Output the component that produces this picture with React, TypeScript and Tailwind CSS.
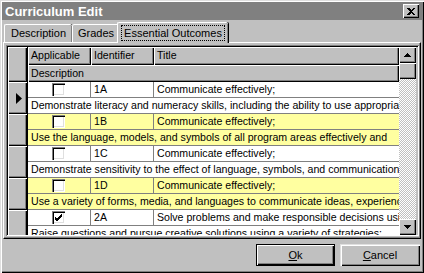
import React from 'react';

type Outcome = {
  id: string;
  title: string;
  description: string;
  applicable: boolean;
};

const outcomes: Outcome[] = [
  {
    id: '1A',
    title: 'Communicate effectively;',
    description: 'Demonstrate literacy and numeracy skills, including the ability to use appropriate technology',
    applicable: false,
  },
  {
    id: '1B',
    title: 'Communicate effectively;',
    description: 'Use the language, models, and symbols of all program areas effectively and',
    applicable: false,
  },
  {
    id: '1C',
    title: 'Communicate effectively;',
    description: 'Demonstrate sensitivity to the effect of language, symbols, and communication',
    applicable: false,
  },
  {
    id: '1D',
    title: 'Communicate effectively;',
    description: 'Use a variety of forms, media, and languages to communicate ideas, experiences',
    applicable: false,
  },
  {
    id: '2A',
    title: 'Solve problems and make responsible decisions using critical thinking',
    description: 'Raise questions and pursue creative solutions using a variety of strategies;',
    applicable: true,
  },
];

const raised = 'bg-[#c0c0c0] shadow-[inset_1px_1px_0_#ffffff,inset_-1px_-1px_0_#000000,inset_-2px_-2px_0_#808080]';

const CheckBox: React.FC<{ checked: boolean }> = ({ checked }) => (
  <div className="w-[13px] h-[13px] bg-white flex items-center justify-center shadow-[inset_1px_1px_0_#808080,inset_2px_2px_0_#000000,inset_-1px_-1px_0_#ffffff,inset_-2px_-2px_0_#dfdfdf]">
    {checked && (
      <svg width="9" height="9" viewBox="0 0 9 9" className="block">
        <path d="M1 4 L3 6 L8 1 M1 5 L3 7 L8 2 M1 6 L3 8 L8 3" stroke="#000" strokeWidth="1" fill="none" shapeRendering="crispEdges" />
      </svg>
    )}
  </div>
);

const ScrollArrow: React.FC<{ up?: boolean }> = ({ up }) => (
  <div className={`h-[16px] w-[17px] flex items-center justify-center ${raised}`}>
    <svg width="7" height="4" viewBox="0 0 7 4" className="block">
      <path d={up ? 'M3.5 0 L7 4 L0 4 Z' : 'M0 0 L7 0 L3.5 4 Z'} fill="#000" shapeRendering="crispEdges" />
    </svg>
  </div>
);

const Tab: React.FC<{ label: string; width: string; selected?: boolean }> = ({ label, width, selected }) =>
  selected ? (
    <div
      className={`${width} h-[21px] -mb-px -ml-[2px] relative z-10 bg-[#c0c0c0] border-t border-l border-white rounded-tl-[2px] rounded-tr-[2px] shadow-[inset_-1px_0_0_#808080,1px_0_0_#000000] flex items-start justify-center pt-[2px] px-[3px]`}
    >
      <div className="w-full h-[16px] border border-dotted border-black flex items-center justify-center">
        {label}
      </div>
    </div>
  ) : (
    <div
      className={`${width} h-[18px] bg-[#c0c0c0] border-t border-l border-white rounded-tl-[2px] rounded-tr-[2px] shadow-[inset_-1px_0_0_#808080,1px_0_0_#000000] flex items-center justify-center`}
    >
      {label}
    </div>
  );

export default function App() {
  return (
    <div
      className="w-[424px] h-[273px] bg-[#c0c0c0] p-[2px] flex flex-col text-[10.6px] text-black overflow-hidden shadow-[inset_1px_1px_0_#dfdfdf,inset_2px_2px_0_#ffffff,inset_-1px_-1px_0_#000000,inset_-2px_-2px_0_#808080]"
      style={{ fontFamily: '"Liberation Sans", Arial, sans-serif' }}
    >
      {/* title bar */}
      <div className="h-[18px] bg-[#808080] flex items-center justify-between pl-[3px] pr-[3px] shrink-0">
        <span className="text-white font-bold text-[13px] leading-none">Curriculum Edit</span>
        <div className="w-[16px] h-[14px] bg-[#c0c0c0] flex items-center justify-center shadow-[inset_1px_1px_0_#ffffff,inset_-1px_-1px_0_#000000,inset_-2px_-2px_0_#808080]">
          <svg width="8" height="7" viewBox="0 0 8 7" className="block">
            <path d="M0 0 L2 0 L4 2 L6 0 L8 0 L5 3.5 L8 7 L6 7 L4 5 L2 7 L0 7 L3 3.5 Z" fill="#000" shapeRendering="crispEdges" />
          </svg>
        </div>
      </div>

      {/* tabs */}
      <div className="h-[22px] flex items-end pl-[2px] shrink-0 text-[11px]">
        <Tab label="Description" width="w-[68px]" />
        <Tab label="Grades" width="w-[47px]" />
        <Tab label="Essential Outcomes" width="w-[111px]" selected />
      </div>

      {/* tab panel */}
      <div className="h-[197px] mx-[1px] border-t border-l border-white border-r border-b border-r-black border-b-black shadow-[inset_-1px_-1px_0_#808080] pt-[2px] pl-[2px] pr-[1px] pb-[2px] shrink-0">
        <div className="h-full flex shadow-[inset_1px_1px_0_#808080,inset_-1px_-1px_0_#ffffff] p-[1px]">
          <div className="flex-1 flex border-t border-l border-black overflow-hidden">
            {/* indicator column */}
            <div className="w-[20px] flex flex-col border-r border-black shrink-0">
              <div className={`h-[35px] shrink-0 ${raised}`} />
              {outcomes.map((o, i) => (
                <div key={o.id} className={`h-[32px] shrink-0 flex items-center justify-center ${raised}`}>
                  {i === 0 && (
                    <svg width="6" height="11" viewBox="0 0 6 11" className="block ml-[2px]">
                      <path d="M0 0 L6 5.5 L0 11 Z" fill="#000" />
                    </svg>
                  )}
                </div>
              ))}
            </div>

            {/* data */}
            <div className="w-[371px] flex flex-col shrink-0">
              <div className="h-[18px] flex shrink-0">
                <div className={`w-[63px] pl-[3px] flex items-center ${raised}`}>Applicable</div>
                <div className={`w-[63px] pl-[3px] flex items-center ${raised}`}>Identifier</div>
                <div className={`flex-1 pl-[3px] flex items-center ${raised}`}>Title</div>
              </div>
              <div className={`h-[17px] pl-[3px] flex items-center shrink-0 ${raised}`}>Description</div>
              {outcomes.map((o, i) => {
                const bg = i % 2 === 1 ? 'bg-[#ffffa0]' : 'bg-white';
                return (
                  <div key={o.id} className={`h-[32px] flex flex-col shrink-0 ${bg}`}>
                    <div className="h-[16px] flex border-b border-[#808080]">
                      <div className="w-[63px] flex items-center justify-center border-r border-[#808080] pr-[2px]">
                        <CheckBox checked={o.applicable} />
                      </div>
                      <div className="w-[63px] pl-[3px] flex items-center border-r border-[#808080]">{o.id}</div>
                      <div className="flex-1 pl-[3px] flex items-center whitespace-nowrap overflow-hidden">{o.title}</div>
                    </div>
                    <div className="h-[16px] pl-[3px] flex items-center border-b border-[#808080] whitespace-nowrap overflow-hidden">
                      {o.description}
                    </div>
                  </div>
                );
              })}
            </div>

            {/* scrollbar */}
            <div className="w-[17px] flex flex-col shrink-0">
              <ScrollArrow up />
              <div className={`h-[16px] shrink-0 ${raised}`} />
              <div className="flex-1 bg-[image:repeating-conic-gradient(#c0c0c0_0%_25%,#ffffff_0%_50%)] bg-[length:2px_2px]" />
              <ScrollArrow />
            </div>
          </div>
        </div>
      </div>

      {/* buttons */}
      <div className="flex justify-end gap-[5px] pt-[5px] pr-[2px] text-[11px]">
        <button className="w-[79px] h-[22px] bg-[#c0c0c0] border border-black shadow-[inset_1px_1px_0_#ffffff,inset_-1px_-1px_0_#000000,inset_-2px_-2px_0_#808080] flex items-center justify-center">
          <span>
            <span className="underline">O</span>k
          </span>
        </button>
        <button className="w-[80px] h-[22px] bg-[#c0c0c0] shadow-[inset_1px_1px_0_#dfdfdf,inset_2px_2px_0_#ffffff,inset_-1px_-1px_0_#000000,inset_-2px_-2px_0_#808080] flex items-center justify-center">
          <span>
            <span className="underline">C</span>ancel
          </span>
        </button>
      </div>
    </div>
  );
}
